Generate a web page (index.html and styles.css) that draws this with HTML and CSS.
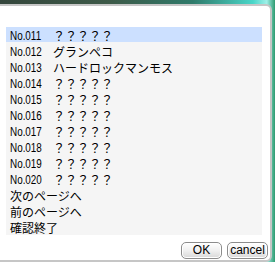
FILE: index.html
```html
<!DOCTYPE html>
<html lang="ja">
<head>
<meta charset="utf-8">
<link rel="stylesheet" href="styles.css">
</head>
<body>
<div class="dialog">
  <ul class="list">
    <li class="row selected"><span class="no">No.011</span><span class="name">？？？？？</span></li>
    <li class="row"><span class="no">No.012</span><span class="name">グランペコ</span></li>
    <li class="row"><span class="no">No.013</span><span class="name">ハードロックマンモス</span></li>
    <li class="row"><span class="no">No.014</span><span class="name">？？？？？</span></li>
    <li class="row"><span class="no">No.015</span><span class="name">？？？？？</span></li>
    <li class="row"><span class="no">No.016</span><span class="name">？？？？？</span></li>
    <li class="row"><span class="no">No.017</span><span class="name">？？？？？</span></li>
    <li class="row"><span class="no">No.018</span><span class="name">？？？？？</span></li>
    <li class="row"><span class="no">No.019</span><span class="name">？？？？？</span></li>
    <li class="row"><span class="no">No.020</span><span class="name">？？？？？</span></li>
    <li class="row"><span class="name">次のページへ</span></li>
    <li class="row"><span class="name">前のページへ</span></li>
    <li class="row"><span class="name">確認終了</span></li>
  </ul>
  <div class="buttons">
    <button class="btn ok">OK</button>
    <button class="btn cancel">cancel</button>
  </div>
</div>
</body>
</html>
```
FILE: styles.css
```css
html, body {
  margin: 0;
  padding: 0;
  width: 275px;
  height: 262px;
  overflow: hidden;
}
body {
  background:
    linear-gradient(to right, #34463c 0%, #3d5a48 40%, #2f7a6a 70%, #49d6c8 92%, #9ff0e8 97%, #2f9a70 100%);
  padding: 4px 3px 0 0;
  box-sizing: border-box;
  font-family: "Noto Sans CJK JP", sans-serif;
}
.dialog {
  margin-left: -6px;
  height: 258px;
  box-sizing: border-box;
  background: #ffffff;
  border: 2px solid #c6c6c6;
  border-radius: 6px;
  padding: 21px 8px 0 10px;
  display: flex;
  flex-direction: column;
}
.list {
  list-style: none;
  margin: 0;
  padding: 0;
  background: #f5f5f5;
  height: 208px;
}
.row {
  height: 16px;
  display: flex;
  align-items: center;
  padding-left: 4px;
  font-size: 12px;
  line-height: 15px;
  color: #000;
  white-space: nowrap;
}
.row.selected {
  background: linear-gradient(to bottom, #cce0ff 0, #cce0ff 15px, transparent 15px);
}
.no {
  width: 43px;
  flex: none;
}
.no::before {
  content: none;
}
.no {
  font-family: "Liberation Sans", Arial, sans-serif;
  font-size: 13px;
  display: inline-block;
  transform: scaleX(0.76);
  transform-origin: left center;
}
.name {
  font-family: "Noto Sans CJK JP", sans-serif;
  font-size: 12px;
}
.buttons {
  display: flex;
  justify-content: flex-end;
  gap: 5px;
  margin-top: 7px;
  margin-right: -6px;
}
.btn {
  height: 17px;
  padding: 0;
  border: 1px solid #8c8c8c;
  border-radius: 5px;
  background: linear-gradient(to bottom, #ffffff 0%, #f0f0f0 50%, #d8d8d8 100%);
  box-shadow: inset 0 0 0 1px #ffffff;
  font-family: "Liberation Sans", Arial, sans-serif;
  font-size: 12px;
  line-height: 15px;
  color: #000;
}
.ok { width: 41px; }
.cancel { width: 41px; }
```
